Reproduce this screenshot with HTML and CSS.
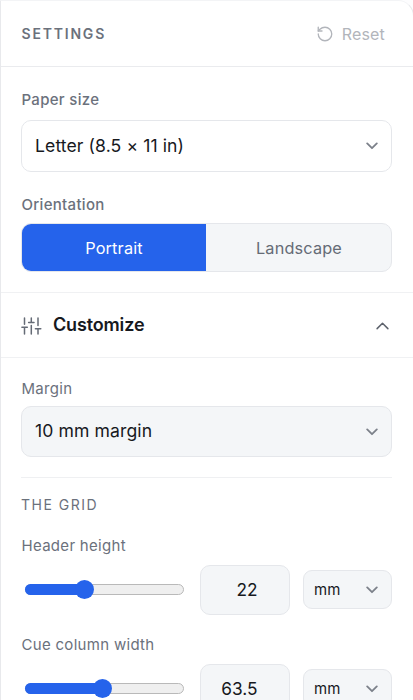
FILE: index.html
```html
<!DOCTYPE html>
<html lang="en">
<head>
<meta charset="utf-8">
<title>Settings</title>
<link rel="stylesheet" href="styles.css">
</head>
<body>
<aside class="panel">
  <header class="panel-head">
    <h2 class="title"><span>SETTINGS</span></h2>
    <button class="reset">
      <svg class="reset-icon" viewBox="0 0 24 24"><path d="M3 12a9 9 0 1 0 9-9 9.75 9.75 0 0 0-6.74 2.74L3 8"/><path d="M3 3v5h5"/></svg>
      <span>Reset</span>
    </button>
  </header>
  <section class="paper">
    <div class="label medium"><span>Paper size</span></div>
    <div class="select white"><span>Letter (8.5 × 11 in)</span><svg class="chev" viewBox="0 0 12 8"><path d="M1.2 1.4 6 6.2l4.8-4.8"/></svg></div>
    <div class="label medium orient"><span>Orientation</span></div>
    <div class="segments">
      <button class="segment active"><span>Portrait</span></button>
      <button class="segment"><span>Landscape</span></button>
    </div>
  </section>
  <div class="customize">
    <svg class="sliders" viewBox="0 0 21 18"><path d="M3.5 1v6.2M.9 10.2h5.4M3.5 10.2V17M10.3 1v4.4M7.6 5.4H13M10.3 8.6V17M17 1v7.6M14.4 11.8h5.4M17 11.8V17"/></svg>
    <h3 class="customize-title"><span>Customize</span></h3>
    <svg class="chev up" viewBox="0 0 12 8"><path d="M.6 6.6 6 1.2l5.4 5.4"/></svg>
  </div>
  <section class="options">
    <div class="label"><span>Margin</span></div>
    <div class="select margin"><span>10 mm margin</span><svg class="chev" viewBox="0 0 12 8"><path d="M1.2 1.4 6 6.2l4.8-4.8"/></svg></div>
    <div class="grid-title"><span>THE GRID</span></div>
    <div class="label"><span>Header height</span></div>
    <div class="control">
      <div class="range"><div class="fill first"></div></div>
      <div class="number"><span>22</span></div>
      <div class="unit"><span>mm</span><svg class="chev" viewBox="0 0 12 8"><path d="M1.2 1.4 6 6.2l4.8-4.8"/></svg></div>
    </div>
    <div class="label cue"><span>Cue column width</span></div>
    <div class="control">
      <div class="range"><div class="fill second"></div></div>
      <div class="number"><span>63.5</span></div>
      <div class="unit"><span>mm</span><svg class="chev" viewBox="0 0 12 8"><path d="M1.2 1.4 6 6.2l4.8-4.8"/></svg></div>
    </div>
  </section>
</aside>
</body>
</html>
```
FILE: styles.css
```css
* { box-sizing: border-box; }
html, body { height: 100%; }
body { margin: 0; overflow: hidden; background: #fdfdfe; font-family: Inter, sans-serif; color: #17191e; }
h2, h3 { margin: 0; }
button { font: inherit; border: 0; background: none; padding: 0; }
svg { fill: none; stroke: currentColor; stroke-linecap: round; stroke-linejoin: round; flex: none; }
.panel { width: 414px; height: 700px; overflow: hidden; background: #fff; border: 1px solid #e8e9ec; border-top-color: #f3f4f6; border-bottom: 0; border-radius: 0 16px 0 0; }
.panel-head { height: 66px; padding: 1px 28px 0 20.5px; display: flex; align-items: center; justify-content: space-between; border-bottom: 1px solid #eaebee; }
.title { margin-top: -2px; font-size: 14px; font-weight: 600; letter-spacing: 1.8px; color: #6b717c; }
.reset { display: flex; align-items: center; gap: 8px; font-size: 16px; color: #b2b5bb; letter-spacing: .16px; }
.reset-icon { width: 18px; height: 18px; stroke-width: 1.8; }
.paper { height: 226px; padding: 23px 21px 0 20px; border-bottom: 1px solid #f0f1f3; }
.label { height: 20px; line-height: 20px; font-size: 15px; letter-spacing: .3px; color: #6b717c; margin-left: .5px; }
.medium { font-weight: 500; }
.select { height: 52px; margin-top: 10px; padding: 0 13px; display: flex; align-items: center; justify-content: space-between; border: 1px solid #e5e7eb; border-radius: 10px; background: #f4f6f8; font-size: 17.6px; letter-spacing: .09px; }
.select > span { margin-top: -2px; }
.white { background: #fff; }
.chev { width: 12px; height: 8px; stroke-width: 1.8; color: #7c818a; }
.orient { margin-top: 23px; }
.segments { height: 49px; margin-top: 8px; display: flex; border: 1px solid #e5e7eb; border-radius: 10px; overflow: hidden; background: #f4f6f8; }
.segment { flex: 1; font-size: 16.3px; color: #656b76; letter-spacing: .16px; padding-left: 1px; }
.active { flex: 0 0 184px; padding-left: 0; color: #fff; background: #2563eb; }
.customize { height: 65px; padding: 0 24px 0 20px; display: flex; align-items: center; border-bottom: 1px solid #f0f1f3; }
.sliders { width: 21px; height: 18px; margin-top: 2px; stroke-width: 1.5; color: #656b76; }
.customize-title { margin: -1px 0 0 11px; font-size: 18px; letter-spacing: -.15px; font-weight: 600; flex: 1; }
.up { width: 13px; margin-top: 2px; stroke-width: 1.5; color: #5d626c; }
.options { padding: 21px 21px 0 20px; }
.margin { height: 51px; margin-top: 7px; }
.margin .chev { margin-top: 1px; }
.grid-title { height: 59px; margin-top: 20px; padding-top: 17px; line-height: 20px; border-top: 1px solid #eff0f2; font-size: 14px; letter-spacing: 1.5px; color: #6b717c; }
.control { display: grid; grid-template-columns: 166px 90px 89px; gap: 13px; align-items: center; margin-top: 9px; height: 49px; }
.range { height: 11px; margin: 0 3px 1px 3.5px; border: 1px solid #b9b9b9; border-radius: 6px; background: #efefef; }
.fill { position: relative; height: 11px; margin: -1px; border-radius: 6px 0 0 6px; background: #2563eb; }
.fill::after { content: ""; position: absolute; right: -9.5px; top: -4px; width: 19px; height: 19px; border-radius: 50%; background: #2563eb; }
.first { width: 60px; }
.second { width: 77.5px; }
.number { height: 50px; padding-right: 31.5px; display: flex; align-items: center; justify-content: flex-end; border: 1px solid #e5e7eb; border-radius: 10px; background: #f4f6f8; font-size: 17.3px; }
.number > span { margin-top: -2px; }
.unit { height: 39px; margin-bottom: 1px; padding: 0 13px 0 10px; display: flex; align-items: center; justify-content: space-between; border: 1px solid #e5e7eb; border-radius: 9px; background: #f4f6f8; font-size: 15px; }
.cue { margin-top: 21px; }
```
